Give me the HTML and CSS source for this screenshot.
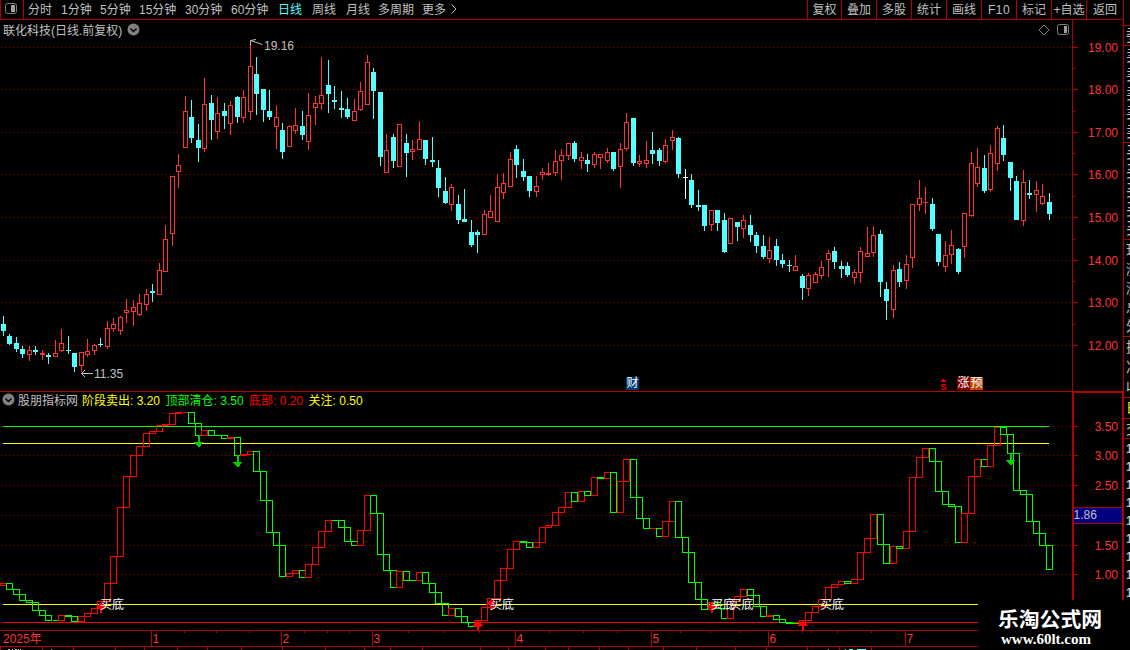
FILE: index.html
```html
<!DOCTYPE html>
<html lang="zh-CN">
<head>
  <meta charset="UTF-8" />
  <meta name="viewport" content="width=device-width, initial-scale=1.0">
  <title>联化科技 日线</title>
  <link rel="stylesheet" href="styles.css">
</head>
<body>
  <div class="terminal">
    <div class="left">
      <div class="toolbar">
        <div class="panel-btn">
          <svg width="12" height="11" viewBox="0 0 12 11"><rect x="0.5" y="0.5" width="11" height="10" rx="2" fill="none" stroke="#808080"/><rect x="6" y="2" width="4" height="7" fill="#a0a0a0"/></svg>
        </div>
        <div class="periods">
          <span>分时</span><span>1分钟</span><span>5分钟</span><span>15分钟</span><span>30分钟</span><span>60分钟</span>
          <span class="active">日线</span><span>周线</span><span>月线</span><span>多周期</span><span>更多</span>
          <svg width="8" height="10" viewBox="0 0 8 10"><path d="M1.5 0.5L6 5L1.5 9.5" fill="none" stroke="#c0c0c0"/></svg>
        </div>
        <div class="tools">
          <span>复权</span><span>叠加</span><span>多股</span><span>统计</span><span>画线</span><span class="latin">F10</span><span>标记</span><span>+自选</span><span>返回</span>
        </div>
      </div>

      <div class="panel kline">
        <svg id="kline" width="1072" height="371" viewBox="0 20 1072 371"></svg>
        <svg id="priceAxis" class="axis" width="51" height="371" viewBox="1072 20 51 371"></svg>
        <div class="title">联化科技(日线.前复权)
          <svg width="13" height="13" viewBox="0 0 13 13"><circle cx="6.5" cy="6.5" r="6" fill="#808080"/><path d="M3.5 5.5L6.5 8.5L9.5 5.5" fill="none" stroke="#000" stroke-width="1.4"/></svg>
        </div>
        <div class="corner">
          <svg width="12" height="12" viewBox="0 0 12 12"><path d="M6 1L11 6L6 11L1 6Z" fill="none" stroke="#808080"/></svg>
          <svg width="12" height="11" viewBox="0 0 12 11"><rect x="0.5" y="0.5" width="11" height="10" rx="2" fill="none" stroke="#808080"/><rect x="7" y="2" width="3" height="7" fill="#a0a0a0"/></svg>
        </div>
        <span class="badge cai">财</span>
        <span class="badge zhang">涨</span>
        <span class="badge yu">预</span>
      </div>

      <div class="panel indicator">
        <svg id="steps" width="1072" height="238" viewBox="0 392 1072 238"></svg>
        <div class="axis-box">
          <svg id="valueAxis" width="48" height="236" viewBox="1074 393 48 236"></svg>
        </div>
        <div class="legend">
          <svg width="13" height="13" viewBox="0 0 13 13"><circle cx="6.5" cy="6.5" r="6" fill="#808080"/><path d="M3.5 5.5L6.5 8.5L9.5 5.5" fill="none" stroke="#000" stroke-width="1.4"/></svg>
          <span class="name">股朋指标网</span>
          <span class="yellow">阶段卖出: 3.20</span>
          <span class="green">顶部清仓: 3.50</span>
          <span class="red">底部: 0.20</span>
          <span class="yellow">关注: 0.50</span>
        </div>
      </div>

      <svg id="timeAxis" width="1123" height="19" viewBox="0 631 1123 19"></svg>
    </div>

    <div class="quote">
      <div class="q q1"><span>委</span></div>
      <div class="q q5"><span>卖</span><span>卖</span><span>卖</span><span>卖</span><span>卖</span></div>
      <div class="q q5"><span>买</span><span>买</span><span>买</span><span>买</span><span>买</span></div>
      <div class="q q5 small"><span>现</span><span>涨</span><span>涨</span><span>总</span><span>外</span></div>
      <div class="q q3 small"><span>换</span><span>净</span><span>收</span></div>
      <div class="q q1 day"><span>日</span></div>
      <div class="q q1 small"><span>交</span></div>
      <div class="ticks"><span>1</span><span>1</span><span>1</span><span>1</span><span>1</span><span>1</span><span>1</span><span>1</span><span>1</span></div>
    </div>

    <div class="site">
      <div class="site-name">乐淘公式网</div>
      <div class="site-url">www.60lt.com</div>
    </div>
  </div>

  <script>
    // u = up (hollow red), d = down (solid cyan), w = unchanged
    // [type, high, bodyTop, bodyBottom, low]
    const candles = [
      ["d",316,324,331,336],["d",334,336,344,345],["d",337,343,349,352],["d",346,349,354,358],
      ["u",346,350,355,361],["d",346,350,352,355],["u",350,353,355,360],["d",353,355,357,364],
      ["u",340,353,357,357],["u",329,343,351,352],["d",336,350,351,354],["d",353,353,367,372],
      ["u",352,352,366,372],["u",339,351,355,357],["u",344,345,351,355],["d",338,344,345,347],
      ["u",321,328,347,349],["u",318,324,329,332],["u",316,317,331,335],["u",299,310,313,323],
      ["u",300,307,312,326],["u",294,303,315,316],["u",289,294,305,311],["d",284,291,293,302],
      ["u",263,270,295,295],["u",225,239,272,272],["u",176,176,234,246],["u",154,165,172,188],
      ["u",96,111,148,148],["d",100,117,138,143],["d",124,140,148,162],["u",78,104,149,152],
      ["d",95,103,120,140],["u",97,113,132,139],["d",103,111,116,129],["u",101,105,124,135],
      ["d",96,97,117,123],["u",90,97,118,123],["u",43,66,112,120],["d",57,74,94,115],
      ["d",89,89,110,122],["d",90,111,117,120],["u",105,117,127,149],["d",123,130,152,159],
      ["u",125,126,147,147],["u",108,125,131,134],["d",111,126,135,140],["u",93,115,142,150],
      ["u",96,103,108,125],["u",57,95,104,110],["d",60,85,94,113],["d",86,100,102,109],
      ["d",91,108,110,118],["d",98,109,117,119],["u",99,111,121,121],["u",82,91,110,111],
      ["u",55,62,105,105],["d",68,72,91,119],["d",92,92,157,166],["u",134,150,173,173],
      ["d",134,137,161,168],["u",124,124,167,167],["d",134,143,153,177],["u",140,149,152,160],
      ["u",121,139,150,150],["d",140,140,159,165],["d",137,160,162,167],["d",160,168,188,197],
      ["d",177,191,203,204],["u",184,187,205,211],["d",195,204,220,224],["d",189,219,222,222],
      ["d",220,232,245,247],["d",230,232,235,253],["u",210,214,235,235],["u",195,211,218,218],
      ["u",174,187,222,222],["u",173,183,193,199],["u",152,159,187,187],["d",145,149,165,178],
      ["d",159,171,177,181],["d",176,176,191,197],["u",176,186,192,197],["u",168,172,175,180],
      ["u",163,173,175,176],["u",150,161,173,176],["u",149,155,161,180],["u",143,143,156,160],
      ["d",141,143,159,162],["u",152,157,161,169],["d",154,160,164,172],["u",152,154,165,168],
      ["u",154,154,158,169],["u",148,152,161,163],["d",152,152,169,171],["u",143,149,167,188],
      ["u",113,122,149,151],["d",118,118,163,166],["u",155,161,164,167],["u",141,160,164,168],
      ["d",132,150,154,164],["d",148,150,161,166],["u",139,145,162,163],["u",130,137,141,150],
      ["d",137,138,174,178],["w",169,177,178,199],["d",174,180,205,208],["d",190,205,207,211],
      ["d",205,205,226,231],["u",210,210,225,231],["d",210,210,223,231],["d",213,220,252,253],
      ["u",218,218,244,244],["d",222,222,227,241],["u",215,220,229,238],["d",215,225,235,242],
      ["d",232,235,246,253],["d",235,246,257,259],["u",237,250,259,263],["d",239,246,260,266],
      ["d",254,260,264,268],["d",260,265,266,272],["u",255,266,271,271],["d",274,276,288,300],
      ["u",273,275,289,296],["u",272,274,283,283],["u",261,267,276,279],["u",250,253,260,277],
      ["d",247,251,262,269],["d",261,266,269,278],["d",262,266,275,277],["u",269,272,278,284],
      ["u",247,251,273,283],["u",227,253,257,257],["u",226,235,253,257],["d",230,234,282,297],
      ["d",282,289,301,320],["u",265,270,310,318],["d",262,269,282,287],["u",255,264,281,289],
      ["u",204,204,258,268],["u",180,198,205,211],["u",187,202,203,214],["d",198,204,229,231],
      ["d",234,234,262,266],["u",241,255,267,272],["u",230,245,255,264],["d",248,249,272,274],
      ["u",213,213,247,258],["u",152,163,216,217],["u",148,167,184,187],["d",155,168,191,193],
      ["u",145,153,190,192],["u",126,128,164,171],["d",125,138,155,161],["d",162,162,178,191],
      ["d",176,181,220,220],["u",170,182,221,226],["d",180,193,195,199],["u",181,190,195,212],
      ["u",184,196,204,205],["d",193,202,214,220]
    ];

    // indicator level per bar, the first entry is the bar before the window
    const levels = [585,
      583,589,594,600,602,610,615,620,620,615,616,621,616,613,608,601,583,556,507,476,
      455,446,433,431,425,424,413,412,411.9,423,435,430,435,435,438,437,455,454,451,471,
      500,532,545,576,573,570,577,564,547,531,520,520.1,527,541,545,530,495,513,554,570,
      587,571,580,580,572,583,592,603,615,608,616,622,626,620,607,598,580,568,549,541,
      542,547,542,527,525,512,507,492,501,491,495,477,478,472,512,481,459,497,518,528,
      527.9,536,521,501,537,552,582,599,609,602,608,618,601,596,589,595,606,616,615,619,
      622,623,623,620,612,606,599,587,584,581,583,579,552,538,514,544,563,546,548,531,
      477,457,448,461,491,504,506,542,513,476,459,466,445,427,434,453,490,494,521,533,
      545,569];

    const barX = i => Math.floor(3.415 + 6.495 * i);
    const rect = (x, y, w, h, fill) => `<rect x="${x}" y="${y}" width="${w}" height="${h}" fill="${fill}"/>`;
    const text = (x, y, s, cls) => `<text x="${x}" y="${y}" class="${cls}">${s}</text>`;
    const put = (id, s) => document.getElementById(id).innerHTML = s;
    const dots = y => `<line x1="1" x2="1071" y1="${y + 0.5}" y2="${y + 0.5}" class="dots"/>`;

    const BORDER = "#b00000", RED = "#ff3232", CYAN = "#54ffff";
    const prices = [[19,47],[18,89],[17,132],[16,174],[15,217],[14,260],[13,302],[12,345]];

    function drawKline() {
      let s = prices.map(p => dots(p[1])).join("");
      candles.forEach(([t, high, top, bottom, low], i) => {
        const x = barX(i);
        const color = t === "u" ? RED : t === "d" ? CYAN : "#ffffff";
        s += rect(x, high, 1, low - high, color);
        s += rect(x - 2, top, 5, bottom - top, color);
        if (t === "u" && bottom - top > 2) s += rect(x - 1, top + 1, 3, bottom - top - 2, "#000");
      });
      s += `<path d="M262.5 44.5L250.5 40.5M250.5 45V40.5L256 39.5" class="pointer"/>` + text(264, 50, "19.16", "note");
      s += `<path d="M93 373.5H81.5M85 370L81.5 373.5L85 377" class="pointer"/>` + text(94, 378, "11.35", "note");
      s += `<path d="M940.5 382L943.5 378.5L946.5 382Z" fill="#ff0000"/>` + text(940.5, 389.5, "S", "dividend");
      put("kline", s);
    }

    function drawPriceAxis() {
      let s = rect(1072, 20, 1, 371, BORDER);
      prices.forEach(([v, y]) => {
        s += rect(1073, y, 5, 1, BORDER) + text(1118, y + 5, v.toFixed(2), "scale");
      });
      [68,111,153,196,239,281,324].forEach(y => s += rect(1073, y, 2, 1, BORDER));
      put("priceAxis", s);
    }

    function drawSteps() {
      let s = [426,455,485,515,545,574].map(dots).join("");
      s += rect(3, 426, 1046, 1, "#00ff00") + rect(3, 443, 1046, 1, "#ffff00");
      s += rect(3, 604, 1046, 1, "#ffff00") + rect(3, 622, 1046, 1, "#ff0000");
      for (let i = 1; i < levels.length; i++) {
        const x = barX(i - 1);
        const a = Math.round(levels[i - 1]) + 0.5, b = Math.round(levels[i]) + 0.5;
        const color = levels[i] < levels[i - 1] ? "#ff0000" : "#00ff00";
        s += `<path d="M${x - 2.5} ${a}H${x + 3.5}V${b}H${x - 2.5}Z" fill="none" stroke="${color}"/>`;
      }
      // sell signals
      [[198.5,435],[237.5,455],[1010.5,453]].forEach(([x, y]) => {
        s += `<path d="M${x - 1} ${y}h2.5v7h3.5l-4.5 5.5l-5 -5.5h3.5z" fill="#00d000"/>`;
      });
      // buy signals
      [[101,602],[478,620],[491,599],[712,602],[803,620]].forEach(([x, y]) => {
        s += `<path d="M${x} ${y}l5 6h-4v5h-2v-5h-4z" fill="#ff0000"/>`;
      });
      [100,490,711,729.5,820].forEach(x => s += text(x, 609, "买底", "signal"));
      put("steps", s);
    }

    function drawValueAxis() {
      let s = "";
      [[3.5,426],[3,455],[2.5,485],[1.5,545],[1,574]].forEach(([v, y]) => {
        s += rect(1074, y, 4, 1, BORDER) + text(1118, y + 5, v.toFixed(2), "scale");
      });
      [441,470,500,530,560,589].forEach(y => s += rect(1074, y, 1, 1, BORDER));
      s += rect(1074, 507, 48, 17, BORDER) + rect(1074, 508, 48, 15, "#000080");
      s += text(1073.5, 519, "1.86", "note");
      put("valueAxis", s);
    }

    function drawTimeAxis() {
      let s = text(3, 643, "2025年", "month");
      [[151,1],[281,2],[372,3],[515,4],[651,5],[768,6],[905,7]].forEach(([x, m]) => {
        s += rect(x, 631, 1, 15, BORDER) + text(x + 1.5, 643, m, "month");
      });
      [184,216,249,304,327,349,408,444,479,549,583,617,680,710,739,802,837,871].forEach(x => s += rect(x, 631, 1, 2, BORDER));
      s += rect(0, 646, 1123, 1, BORDER);
      [0,42,73,115,144,177,207,241,282,325,364,390,422,480,508,545,568,599,628,663,696,735,766,807,839,871].forEach(x => s += rect(x, 647, 1, 3, BORDER));
      [[8,2],[12,1],[15,2],[18,1],[20,1],[51,1],[828,1]].forEach(([x, w]) => s += rect(x, 649, w, 1, "#c0c0c0"));
      [[845,1],[849,4],[857,9]].forEach(([x, w]) => s += rect(x, 649, w, 1, CYAN));
      put("timeAxis", s);
    }

    drawKline();
    drawPriceAxis();
    drawSteps();
    drawValueAxis();
    drawTimeAxis();
  </script>
</body>
</html>
```
FILE: styles.css
```css
:root {
  --border: #b00000;
  --text: #c0c0c0;
  --red: #ff3232;
  --cyan: #54ffff;
}
* { box-sizing: border-box; margin: 0; padding: 0; }
body {
  background: #000;
  color: var(--text);
  font-family: "Liberation Sans", "Noto Sans CJK SC", sans-serif;
  font-size: 12px;
  overflow: hidden;
}
svg { display: block; flex: none; }
svg rect, svg line, #steps path { shape-rendering: crispEdges; }
.panel-btn rect, .corner rect { shape-rendering: auto; }

.terminal {
  position: relative;
  display: grid;
  grid-template-columns: 1123px 7px;
  width: 1130px; height: 650px;
  overflow: hidden;
}
.left { display: flex; flex-direction: column; height: 650px; }

/* toolbar */
.toolbar {
  display: flex;
  height: 20px;
  line-height: 20px;
  border-bottom: 1px solid var(--border);
  white-space: nowrap;
}
.panel-btn {
  width: 24px;
  padding: 3px 0 0 4px;
  border-left: 1px solid var(--border);
  border-right: 1px solid var(--border);
}
.periods {
  display: grid;
  grid-template-columns: 33px 39px 39px 46px 46px 47px 34px 34px 32px 44px 28px 8px;
  padding-left: 4px;
}
.periods svg { margin-top: 4px; }
.periods .active { color: var(--cyan); }
.tools {
  display: grid;
  grid-template-columns: 34px repeat(7, 35px) 37px;
  height: 19px;
  margin-left: auto;
}
.tools span {
  border-left: 1px solid var(--border);
  text-align: center;
}
.tools .latin { letter-spacing: 0.5px; }

/* panels */
.panel {
  position: relative;
  display: flex;
  border-bottom: 1px solid var(--border);
}
.kline { height: 372px; }
.indicator { height: 239px; }
.title {
  position: absolute; left: 3px; top: 0;
  display: flex; align-items: center; gap: 5px;
  height: 18px;
}
.corner {
  position: absolute; left: 1038px; top: 4px;
  display: flex; gap: 7px;
}
.badge {
  position: absolute; top: 357px;
  width: 13px; height: 13px;
  color: #fff;
  line-height: 13px;
  text-align: center;
}
.cai { left: 626px; background: #003c78; }
.zhang { left: 957px; background: #800000; }
.yu { left: 970px; background: #b84a08; }

.axis-box {
  width: 52px; height: 239px;
  margin-top: -1px;
  border: 2px solid var(--border);
  border-bottom: none;
  flex: none;
}
.legend {
  position: absolute; left: 2px; top: -1px;
  display: flex; align-items: center; gap: 5.5px;
  height: 17px;
  white-space: pre;
}
.legend .name { margin: 0 -1.5px 0 -2.5px; }
.yellow { color: #ffff00; }
.green { color: #00ff00; }
.red { color: #ff0000; }

/* chart text */
.dots { stroke: #a00000; stroke-width: 1; stroke-dasharray: 1 3; }
.pointer { fill: none; stroke: var(--text); }
.note { fill: var(--text); }
.scale { fill: var(--red); text-anchor: end; }
.month { fill: var(--red); }
.signal { fill: #fff; }
.dividend { fill: #ff0000; font-size: 9px; font-weight: bold; }

/* quote column, cut off by the window edge */
.quote {
  height: 650px;
  border-left: 1px solid var(--border);
  padding-top: 25px;
  overflow: hidden;
}
.q {
  display: flex; flex-direction: column; justify-content: space-around;
  width: 30px;
  padding-left: 2px;
  border-top: 1px solid var(--border);
  font-size: 16px;
}
.q span { line-height: 18px; }
.q1 { height: 20px; }
.q5 { height: 97px; }
.q3 { height: 61px; }
.small { font-size: 14px; }
.day { height: 21px; color: #ffff00; font-size: 13px; }
.ticks {
  display: flex; flex-direction: column;
  width: 20px;
  padding-left: 2px;
  border-top: 1px solid var(--border);
}
.ticks span { height: 18px; line-height: 20px; font-weight: bold; }

/* site mark */
.site {
  position: absolute; left: 978px; top: 600px;
  width: 152px; height: 50px;
  padding: 6px 0 0 20px;
  background: #000;
  color: #fff;
  white-space: nowrap;
}
.site-name {
  font-family: "Noto Sans CJK SC", sans-serif;
  font-size: 20.8px; font-weight: bold;
  line-height: 25px;
}
.site-url {
  padding-left: 3px;
  font-family: "Liberation Serif", serif;
  font-size: 15px; font-weight: bold;
  line-height: 17px;
}
```
